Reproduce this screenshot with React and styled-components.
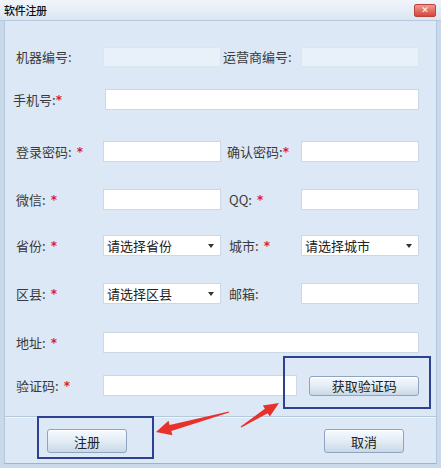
import React from "react";
import styled, { createGlobalStyle } from "styled-components";

const Global = createGlobalStyle`
  html, body { margin: 0; padding: 0; background: #ffffff; }
  body { font-family: "Noto Sans CJK SC", "Noto Sans", sans-serif; }
  * { box-sizing: border-box; }
`;

const Frame = styled.div`
  position: relative;
  width: 441px;
  height: 468px;
  background: #c9d9ea;
  display: flex;
  flex-direction: column;
  overflow: hidden;
`;

const TitleBar = styled.div`
  height: 21px;
  flex: none;
  display: flex;
  align-items: center;
  justify-content: space-between;
  padding: 0 5px 0 4px;
  background: linear-gradient(#f1f5fb, #dbe6f2);
  border-bottom: 1px solid #b7c9dd;
`;

const Title = styled.span`
  font-size: 11px;
  color: #111;
  font-weight: 500;
  letter-spacing: -0.3px;
`;

const CloseBtn = styled.div`
  width: 22px;
  height: 13px;
  border-radius: 2px;
  background: linear-gradient(#f09a90, #d9453b);
  border: 1px solid #b8443b;
  display: flex;
  align-items: center;
  justify-content: center;
  color: #fff;
  font-family: "DejaVu Sans", sans-serif;
  font-size: 9px;
  font-weight: bold;
  line-height: 1;
`;

const Body = styled.div`
  flex: 1;
  margin: 0 4px 4px;
  background: #dce8f5;
  border-left: 1px solid #b3c7dc;
  border-right: 1px solid #b3c7dc;
  border-bottom: 1px solid #9fb4ca;
  display: flex;
  flex-direction: column;
`;

const Form = styled.div`
  padding: 25px 0 0 8px;
  display: flex;
  flex-direction: column;
  height: 395px;
`;

const Row = styled.div`
  display: grid;
  grid-template-columns: 90px 118px 80px 118px;
  align-items: center;
  height: 21px;
  margin-top: ${(p) => p.$gap}px;
`;

const Label = styled.div`
  font-size: 13px;
  color: #3a3a3a;
  white-space: nowrap;
  padding-left: ${(p) => p.$indent ?? 3}px;
  display: flex;
  align-items: center;
`;

const Star = styled.span`
  color: #d9212c;
  font-size: 12px;
  margin-left: ${(p) => p.$space ?? 5}px;
  font-family: "DejaVu Sans", sans-serif;
  font-weight: bold;
`;

const Field = styled.div`
  height: ${(p) => p.$h ?? 21}px;
  width: ${(p) => (p.$w ? `${p.$w}px` : "auto")};
  background: ${(p) => (p.$disabled ? "#e8f0f9" : "#ffffff")};
  border: 1px solid ${(p) => (p.$disabled ? "#dbe5f0" : "#ccd8e5")};
  grid-column: ${(p) => p.$span ?? "auto"};
  margin-left: ${(p) => p.$shift ?? 0}px;
`;

const Select = styled.div`
  height: 21px;
  background: #ffffff;
  border: 1px solid #ccd8e5;
  display: flex;
  align-items: center;
  justify-content: space-between;
  padding: 0 6px 0 3px;
  font-size: 13px;
  color: #222;
`;

const Caret = styled.span`
  width: 0;
  height: 0;
  border-left: 3px solid transparent;
  border-right: 3px solid transparent;
  border-top: 4px solid #333;
`;

const CodeWrap = styled.div`
  grid-column: 2 / 5;
  display: flex;
  align-items: center;
  gap: 12px;
`;

const Button = styled.div`
  width: ${(p) => p.$w}px;
  height: ${(p) => p.$h ?? 24}px;
  border: 1px solid #8fa5bd;
  border-radius: 3px;
  background: linear-gradient(#f7fafd 0%, #e3ecf5 50%, #c9d8e8 100%);
  box-shadow: inset 0 1px 0 #ffffff;
  display: flex;
  align-items: center;
  justify-content: center;
  font-size: 13px;
  color: #222;
`;

const Divider = styled.div`
  height: 2px;
  border-top: 1px solid #b5c7da;
  border-bottom: 1px solid #f0f5fa;
`;

const Footer = styled.div`
  flex: 1;
  display: flex;
  justify-content: space-between;
  align-items: flex-start;
  padding: 11px 32px 0 42px;
`;

const MarkBox = styled.div`
  position: absolute;
  left: ${(p) => p.$x}px;
  top: ${(p) => p.$y}px;
  width: ${(p) => p.$w}px;
  height: ${(p) => p.$h}px;
  border: 2px solid #2d4191;
  pointer-events: none;
`;

const Overlay = styled.svg`
  position: absolute;
  left: 0;
  top: 0;
  pointer-events: none;
`;

function arrowPoints(tx, ty, hx, hy, shaft, head) {
  const dx = hx - tx;
  const dy = hy - ty;
  const len = Math.hypot(dx, dy);
  const ux = dx / len;
  const uy = dy / len;
  const nx = -uy;
  const ny = ux;
  const headLen = 15;
  const bx = hx - ux * headLen;
  const by = hy - uy * headLen;
  const pts = [
    [tx + nx * 0.6, ty + ny * 0.6],
    [bx + nx * shaft, by + ny * shaft],
    [bx + nx * head, by + ny * head],
    [hx, hy],
    [bx - nx * head, by - ny * head],
    [bx - nx * shaft, by - ny * shaft],
    [tx - nx * 0.6, ty - ny * 0.6],
  ];
  return pts.map((p) => p.map((v) => v.toFixed(1)).join(",")).join(" ");
}

export default function App() {
  return (
    <>
      <Global />
      <Frame>
        <TitleBar>
          <Title>软件注册</Title>
          <CloseBtn>✕</CloseBtn>
        </TitleBar>
        <Body>
          <Form>
            <Row $gap={0}>
              <Label>机器编号:</Label>
              <Field $disabled $h={20} />
              <Label $indent={2}>运营商编号:</Label>
              <Field $disabled $h={20} />
            </Row>
            <Row $gap={22}>
              <Label $indent={0}>
                手机号:<Star $space={0}>*</Star>
              </Label>
              <Field $span="2 / 5" $shift={2} />
            </Row>
            <Row $gap={31}>
              <Label>
                登录密码:<Star>*</Star>
              </Label>
              <Field />
              <Label $indent={6}>
                确认密码:<Star $space={0}>*</Star>
              </Label>
              <Field />
            </Row>
            <Row $gap={27}>
              <Label>
                微信:<Star>*</Star>
              </Label>
              <Field />
              <Label $indent={8}>
                QQ:<Star>*</Star>
              </Label>
              <Field />
            </Row>
            <Row $gap={25}>
              <Label>
                省份:<Star>*</Star>
              </Label>
              <Select>
                请选择省份
                <Caret />
              </Select>
              <Label $indent={8}>
                城市:<Star>*</Star>
              </Label>
              <Select>
                请选择城市
                <Caret />
              </Select>
            </Row>
            <Row $gap={27}>
              <Label>
                区县:<Star>*</Star>
              </Label>
              <Select>
                请选择区县
                <Caret />
              </Select>
              <Label $indent={8}>邮箱:</Label>
              <Field />
            </Row>
            <Row $gap={28}>
              <Label>
                地址:<Star>*</Star>
              </Label>
              <Field $span="2 / 5" />
            </Row>
            <Row $gap={22}>
              <Label>
                验证码:<Star>*</Star>
              </Label>
              <CodeWrap>
                <Field $w={195} />
                <Button $w={110} $h={20}>
                  获取验证码
                </Button>
              </CodeWrap>
            </Row>
          </Form>
          <Divider />
          <Footer>
            <Button $w={80}>注册</Button>
            <Button $w={80}>取消</Button>
          </Footer>
        </Body>
        <MarkBox $x={37} $y={416} $w={117} $h={43} />
        <MarkBox $x={283} $y={356} $w={148} $h={53} />
        <Overlay width="441" height="468" viewBox="0 0 441 468">
          <polygon points={arrowPoints(229, 412, 156, 432, 3.2, 7.5)} fill="#e8312b" />
          <polygon points={arrowPoints(241, 427, 279, 403, 2.6, 6.5)} fill="#e8312b" />
        </Overlay>
      </Frame>
    </>
  );
}
